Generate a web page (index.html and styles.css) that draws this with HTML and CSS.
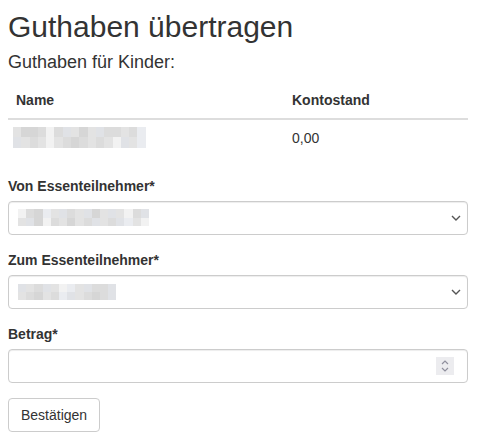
FILE: index.html
```html
<!DOCTYPE html>
<html lang="de">
<head>
<meta charset="utf-8">
<title>Guthaben übertragen</title>
<link rel="stylesheet" href="styles.css">
</head>
<body>
<main class="page">
  <h1 class="title">Guthaben übertragen</h1>
  <h4 class="subtitle">Guthaben für Kinder:</h4>
  <table class="table">
    <thead>
      <tr><th class="col-name">Name</th><th>Kontostand</th></tr>
    </thead>
    <tbody>
      <tr>
        <td>
          <span class="mosaic mosaic-row">
            <i class="m3"></i><i class="m1"></i><i class="m1"></i><i class="m2"></i><i class="m5"></i><i class="m2"></i><i class="m4"></i><i class="m3"></i><i class="m1"></i><i class="m3"></i><i class="m4"></i><i class="m2"></i><i class="m2"></i><i class="m3"></i><i class="m2"></i><i class="m6"></i>
            <i class="m4"></i><i class="m3"></i><i class="m2"></i><i class="m3"></i><i class="m5"></i><i class="m3"></i><i class="m2"></i><i class="m1"></i><i class="m2"></i><i class="m3"></i><i class="m2"></i><i class="m3"></i><i class="m5"></i><i class="m4"></i><i class="m3"></i><i class="m6"></i>
          </span>
        </td>
        <td>0,00</td>
      </tr>
    </tbody>
  </table>

  <form class="form">
    <div class="form-group">
      <label class="label">Von Essenteilnehmer*</label>
      <div class="control select">
        <span class="mosaic mosaic-sel1">
          <i class="m5"></i><i class="m2"></i><i class="m1"></i><i class="m6"></i><i class="m3"></i><i class="m4"></i><i class="m2"></i><i class="m3"></i><i class="m4"></i><i class="m1"></i><i class="m3"></i><i class="m4"></i><i class="m3"></i><i class="m5"></i><i class="m2"></i><i class="m4"></i>
          <i class="m3"></i><i class="m4"></i><i class="m1"></i><i class="m5"></i><i class="m2"></i><i class="m3"></i><i class="m1"></i><i class="m3"></i><i class="m2"></i><i class="m4"></i><i class="m3"></i><i class="m2"></i><i class="m4"></i><i class="m6"></i><i class="m3"></i><i class="m5"></i>
        </span>
        <svg class="chevron" width="10" height="6" viewBox="0 0 10 6"><polyline points="1,1 5,5 9,1" fill="none" stroke="#555" stroke-width="1.4"/></svg>
      </div>
    </div>
    <div class="form-group">
      <label class="label">Zum Essenteilnehmer*</label>
      <div class="control select">
        <span class="mosaic mosaic-sel2">
          <i class="m4"></i><i class="m3"></i><i class="m2"></i><i class="m4"></i><i class="m3"></i><i class="m5"></i><i class="m6"></i><i class="m3"></i><i class="m4"></i><i class="m2"></i><i class="m2"></i><i class="m4"></i>
          <i class="m3"></i><i class="m2"></i><i class="m1"></i><i class="m3"></i><i class="m2"></i><i class="m6"></i><i class="m4"></i><i class="m3"></i><i class="m2"></i><i class="m1"></i><i class="m2"></i><i class="m4"></i>
        </span>
        <svg class="chevron" width="10" height="6" viewBox="0 0 10 6"><polyline points="1,1 5,5 9,1" fill="none" stroke="#555" stroke-width="1.4"/></svg>
      </div>
    </div>
    <div class="form-group">
      <label class="label" for="betrag">Betrag*</label>
      <div class="control number">
        <input class="number-input" id="betrag" type="text" aria-label="Betrag">
        <span class="spinner">
          <svg width="8" height="14" viewBox="0 0 8 14"><polyline points="1,5 4,2 7,5" fill="none" stroke="#8f8f9d" stroke-width="1.2"/><polyline points="1,9 4,12 7,9" fill="none" stroke="#8f8f9d" stroke-width="1.2"/></svg>
        </span>
      </div>
    </div>
    <button class="btn" type="button">Bestätigen</button>
  </form>
</main>
</body>
</html>
```

FILE: styles.css
```css
html, body {
  margin: 0;
  padding: 0;
  background: #fff;
}

body {
  font-family: "Liberation Sans", Arial, Helvetica, sans-serif;
  font-size: 14px;
  line-height: 20px;
  color: #333;
}

.page {
  padding: 0 9px 0 8px;
  overflow: hidden;
}

.title {
  font-size: 30px;
  font-weight: normal;
  line-height: 1.1;
  margin: 10px 0;
}

.subtitle {
  font-size: 18px;
  font-weight: normal;
  line-height: 1.1;
  margin: 10px 0 9px;
}

.table {
  width: 100%;
  border-collapse: collapse;
  border-spacing: 0;
  margin: 0 0 20px;
}

.table th {
  text-align: left;
  font-weight: bold;
  padding: 8px;
  border-bottom: 2px solid #ddd;
  vertical-align: bottom;
}

.table .col-name {
  width: 60%;
}

.table td {
  padding: 8px;
  vertical-align: top;
}

.mosaic {
  display: grid;
}

.mosaic i {
  display: block;
}

.mosaic-row {
  grid-template-columns: repeat(16, 8.3px);
  grid-template-rows: 10.5px 10.5px;
  margin: -1px 0 -1px -3px;
}

.mosaic-sel1 {
  grid-template-columns: repeat(16, 8.2px);
  grid-template-rows: 8.7px 8.7px;
}

.mosaic-sel2 {
  grid-template-columns: repeat(12, 8.2px);
  grid-template-rows: 8px 8px;
}

.m1 { background: #d6d6d6; }
.m2 { background: #dcdcdc; }
.m3 { background: #e3e3e3; }
.m4 { background: #e0e2e6; }
.m5 { background: #f2f2f2; }
.m6 { background: #eaecf0; }

.form {
  margin: 0;
}

.form-group {
  margin-bottom: 15px;
}

.label {
  display: inline-block;
  font-weight: bold;
  margin-bottom: 5px;
}

.control {
  box-sizing: border-box;
  height: 34px;
  border: 1px solid #ccc;
  border-radius: 4px;
  box-shadow: inset 0 1px 1px rgba(0, 0, 0, 0.075);
  display: flex;
  align-items: center;
  background: #fff;
}

.select {
  padding: 0 6px 0 9px;
  justify-content: space-between;
}

.chevron {
  display: block;
  margin-top: 1px;
}

.number {
  padding: 0 13px 0 12px;
}

.number-input {
  flex: 1;
  border: 0;
  outline: 0;
  background: transparent;
  font: inherit;
  color: inherit;
  padding: 0;
  min-width: 0;
}

.spinner {
  width: 18px;
  height: 18px;
  background: #ececef;
  display: flex;
  align-items: center;
  justify-content: center;
}

.spinner svg {
  display: block;
}

.btn {
  font-family: inherit;
  font-size: 14px;
  line-height: 20px;
  color: #333;
  background: #fff;
  border: 1px solid #ccc;
  border-radius: 4px;
  padding: 6px 12px;
  margin: 0;
  cursor: pointer;
}
```
